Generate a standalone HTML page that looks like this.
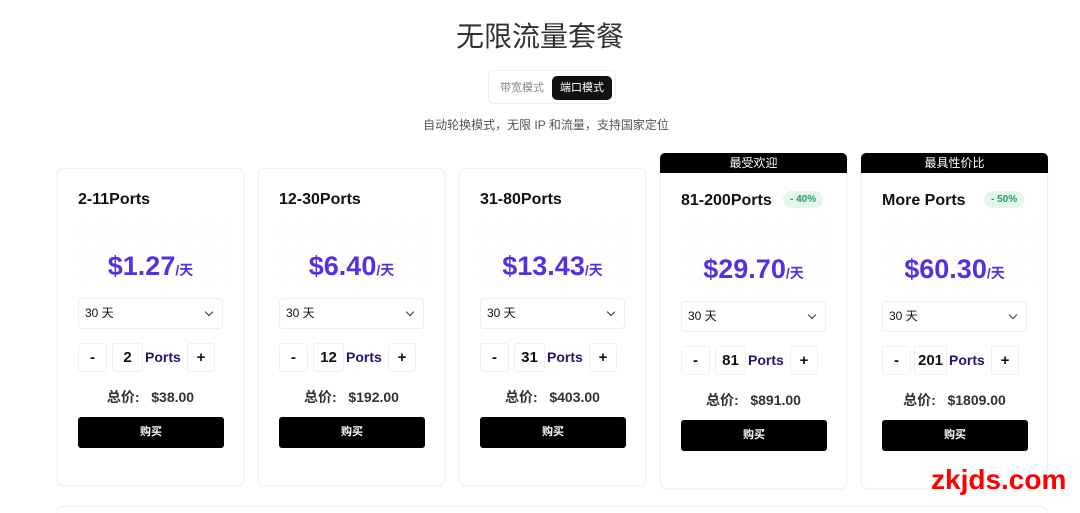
<!DOCTYPE html>
<html><head><meta charset="utf-8"><style>
*{box-sizing:border-box;margin:0;padding:0}
html,body{width:1080px;height:513px;overflow:hidden}
body{background:#fff;font-family:"Liberation Sans","Noto Sans CJK SC",sans-serif;position:relative;color:#111}
.h1{position:absolute;top:15px;left:0;width:1080px;text-align:center;font-size:28px;color:#333;font-weight:400}
.tog{position:absolute;left:488px;top:70px;width:128px;height:34px;border:1px solid #eee;border-radius:6px}
.tog span{position:absolute;top:5px;height:24px;line-height:24px;font-size:11px;padding:0 8px;white-space:nowrap}
.t1{left:3px;color:#888}.t2{left:63px;background:#111;color:#fff;border-radius:5px}
.sub{position:absolute;top:116px;left:6px;width:1080px;text-align:center;font-size:12px;color:#555}
.card{position:absolute;width:187px;border:1px solid #f0f0f0;border-radius:6px;background:#fff;box-shadow:0 1px 3px rgba(0,0,0,.03)}
.band{position:absolute;width:187px;height:20px;background:#000;color:#fff;font-size:12px;text-align:center;line-height:20px;border-radius:5px 5px 0 0}
.ttl{position:absolute;left:20px;font-size:16px;font-weight:700}
.badge{position:absolute;font-size:10px;color:#22a060;background:#e3f6ec;border-radius:10px;padding:3px 7px;font-weight:700}
.grid{position:absolute;left:15px;width:160px;height:70px;background:repeating-linear-gradient(90deg,transparent 0 12px,rgba(0,0,0,.012) 12px 13px),repeating-linear-gradient(0deg,transparent 0 12px,rgba(0,0,0,.012) 12px 13px)}
.price{position:absolute;left:0;width:185px;text-align:center;color:#5530e0;font-weight:700;font-size:27px}
.price small{font-size:14px}
.sel{position:absolute;left:20px;width:145px;height:31px;border:1px solid #eee;border-radius:4px;font-size:12px;padding-left:6px;line-height:29px}
.sel:after{content:"";position:absolute;right:10px;top:10px;width:5px;height:5px;border-right:1.3px solid #333;border-bottom:1.3px solid #333;transform:rotate(45deg)}
.b{position:absolute;height:29px;border:1px solid #f0f0f0;border-radius:3px;text-align:center;line-height:27px;font-size:15px;font-weight:700}
.pt{position:absolute;font-size:14px;font-weight:700;color:#1d1a6a}
.tot{position:absolute;width:185px;text-align:center;font-size:14px;font-weight:700;color:#333}
.buy{position:absolute;left:20px;width:146px;height:31px;background:#000;border-radius:3px;color:#fff;font-size:11px;font-weight:700;text-align:center;line-height:31px}
.wm{position:absolute;left:931px;top:464px;font-family:"Liberation Sans",sans-serif;font-weight:700;font-size:28px;color:#f00}
</style></head><body>
<div class="h1">无限流量套餐</div>
<div class="tog"><span class="t1">带宽模式</span><span class="t2">端口模式</span></div>
<div class="sub">自动轮换模式，无限 IP 和流量，支持国家定位</div>

<div class="card" style="left:57px;top:168px;height:318px"><div class="ttl" style="top:22px">2-11Ports</div><div class="grid" style="top:50px"></div><div class="price" style="top:82px">$1.27<small>/天</small></div><div class="sel" style="top:129px">30 天</div><div class="b" style="left:20px;top:174px;width:29px">-</div><div class="b" style="left:54px;top:174px;width:31px">2</div><div class="pt" style="left:87px;top:180px">Ports</div><div class="b" style="left:129px;top:174px;width:28px">+</div><div class="tot" style="top:218px">总价:&nbsp;&nbsp; $38.00</div><div class="buy" style="top:248px">购买</div></div>

<div class="card" style="left:258px;top:168px;height:318px"><div class="ttl" style="top:22px">12-30Ports</div><div class="grid" style="top:50px"></div><div class="price" style="top:82px">$6.40<small>/天</small></div><div class="sel" style="top:129px">30 天</div><div class="b" style="left:20px;top:174px;width:29px">-</div><div class="b" style="left:54px;top:174px;width:31px">12</div><div class="pt" style="left:87px;top:180px">Ports</div><div class="b" style="left:129px;top:174px;width:28px">+</div><div class="tot" style="top:218px">总价:&nbsp;&nbsp; $192.00</div><div class="buy" style="top:248px">购买</div></div>

<div class="card" style="left:459px;top:168px;height:318px"><div class="ttl" style="top:22px">31-80Ports</div><div class="grid" style="top:50px"></div><div class="price" style="top:82px">$13.43<small>/天</small></div><div class="sel" style="top:129px">30 天</div><div class="b" style="left:20px;top:174px;width:29px">-</div><div class="b" style="left:54px;top:174px;width:31px">31</div><div class="pt" style="left:87px;top:180px">Ports</div><div class="b" style="left:129px;top:174px;width:28px">+</div><div class="tot" style="top:218px">总价:&nbsp;&nbsp; $403.00</div><div class="buy" style="top:248px">购买</div></div>

<div class="card" style="left:660px;top:153px;height:336px"><div class="band" style="left:-1px;top:-1px">最受欢迎</div><div class="ttl" style="top:38px">81-200Ports</div><div class="badge" style="left:122px;top:37px">- 40%</div><div class="grid" style="top:65px"></div><div class="price" style="top:100px">$29.70<small>/天</small></div><div class="sel" style="top:147px">30 天</div><div class="b" style="left:20px;top:192px;width:29px">-</div><div class="b" style="left:54px;top:192px;width:31px">81</div><div class="pt" style="left:87px;top:198px">Ports</div><div class="b" style="left:129px;top:192px;width:28px">+</div><div class="tot" style="top:236px">总价:&nbsp;&nbsp; $891.00</div><div class="buy" style="top:266px">购买</div></div>

<div class="card" style="left:861px;top:153px;height:336px"><div class="band" style="left:-1px;top:-1px">最具性价比</div><div class="ttl" style="top:38px">More Ports</div><div class="badge" style="left:122px;top:37px">- 50%</div><div class="grid" style="top:65px"></div><div class="price" style="top:100px">$60.30<small>/天</small></div><div class="sel" style="top:147px">30 天</div><div class="b" style="left:20px;top:192px;width:29px">-</div><div class="b" style="left:52px;top:192px;width:33px">201</div><div class="pt" style="left:87px;top:198px">Ports</div><div class="b" style="left:129px;top:192px;width:28px">+</div><div class="tot" style="top:236px">总价:&nbsp;&nbsp; $1809.00</div><div class="buy" style="top:266px">购买</div></div>

<div class="card" style="left:57px;top:506px;width:990px;height:7px;border-bottom:none;border-radius:6px 6px 0 0"></div>
<div class="wm">zkjds.com</div>
</body></html>
